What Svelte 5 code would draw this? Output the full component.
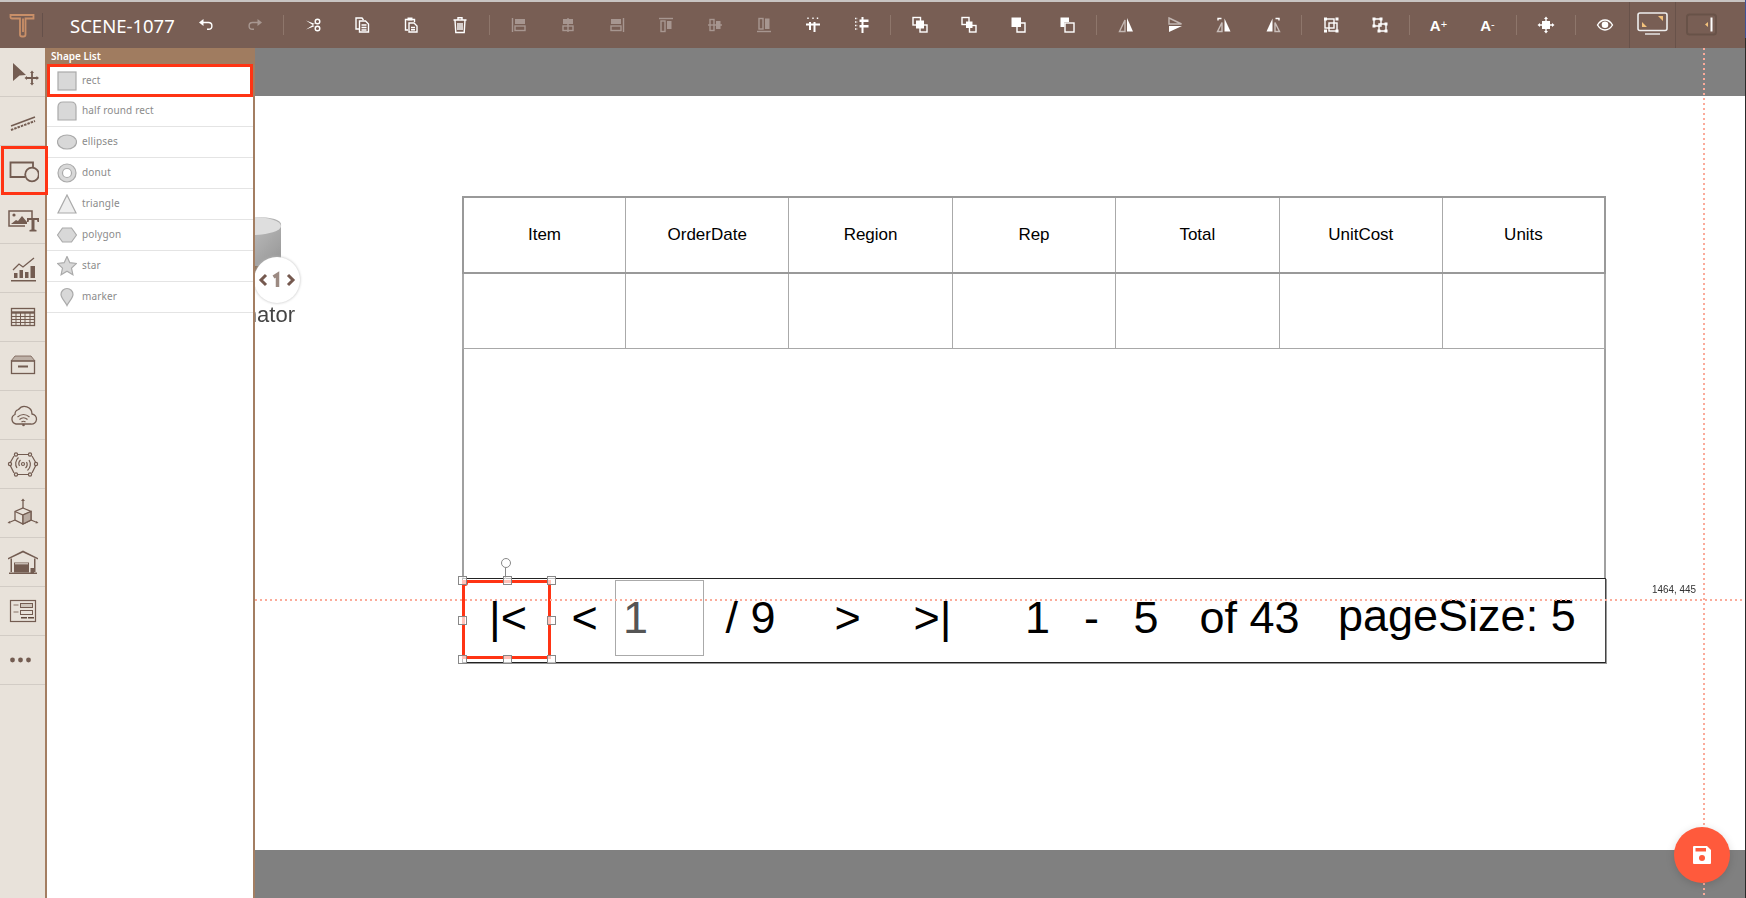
<script lang="ts">
	const L = 'fill="none" stroke="currentColor" stroke-width="1.4"';
	const F = 'fill="currentColor"';

	// markup of each toolbar icon, drawn on a 24 box
	const toolbar = [
		{ svg: `<path ${L} d="M8 9.5h6.5a3.4 3.4 0 0 1 0 6.8H13"/><path ${F} d="M9.5 6v7L5 9.5z"/>` },
		{ off: true, svg: `<path ${L} d="M16 9.5H9.5a3.4 3.4 0 0 0 0 6.8H11"/><path ${F} d="M14.5 6v7L19 9.5z"/>` },
		null,
		{ svg: `<circle ${L} cx="16.5" cy="8.5" r="2.3"/><circle ${L} cx="16.5" cy="15.5" r="2.3"/><path ${F} d="M5 7.5l9 3.5v2.5zM5 16.5l9-3.5V10.5z"/>` },
		{ svg: `<path ${L} d="M9 16H6V5h6l1.500 2"/><path ${L} d="M9.500 8h6l3 3v8h-9z"/><path ${L} d="M11.500 12h5M11.500 14.500h5M11.500 17h5" stroke-width="1"/>` },
		{ svg: `<path ${L} d="M9 17H6.500V6.500h9V9"/><path ${F} d="M8.500 4.500h5v3h-5z"/><path ${L} d="M10 10h5l3 3v6h-8z"/><path ${L} d="M12 14.500h4M12 16.800h4" stroke-width="1"/>` },
		{ svg: `<path ${L} d="M5.500 7h13M10 7V4.800h4V7M7 7l.8 12.500h8.400L17 7"/><path ${L} d="M10 10v7M12 10v7M14 10v7" stroke-width="1"/>` },
		null,
		{ off: true, svg: `<path ${L} d="M5.500 5v14"/><path ${F} d="M8 6h10v5H8z"/><rect ${L} x="8" y="13" width="10" height="4.500"/>` },
		{ off: true, svg: `<path ${L} d="M12 5v14"/><path ${F} d="M7 6h10v5H7z"/><rect ${L} x="7" y="13" width="10" height="4.500"/>` },
		{ off: true, svg: `<path ${L} d="M18.500 5v14"/><path ${F} d="M6 6h10v5H6z"/><rect ${L} x="6" y="13" width="10" height="4.500"/>` },
		{ off: true, svg: `<path ${L} d="M5 5.500h14"/><rect ${L} x="7" y="8" width="4" height="10.500"/><path ${F} d="M13 8h4.500v8H13z"/>` },
		{ off: true, svg: `<path ${L} d="M5 12h14"/><rect ${L} x="7" y="6.500" width="4" height="11"/><path ${F} d="M13 8h4.500v8H13z"/>` },
		{ off: true, svg: `<path ${L} d="M5 18.500h14"/><rect ${L} x="7" y="5.500" width="4" height="10.500"/><path ${F} d="M13 5.500h4.500V16H13z"/>` },
		{ svg: `<path ${L} d="M7 4.500v2M12 4.500v2M16.500 4.500v2" stroke-width="1" stroke-dasharray="1.500 .8"/><path ${F} d="M5 10.500h14v2H5zM8 9h2v8H8zM12.500 9h2v10h-2z"/>` },
		{ svg: `<path ${L} d="M5 5.500h2.500M5 9h2.500M5 12.500h2.500M5 16h2.500" stroke-width="1" stroke-dasharray="1.500 .8"/><path ${F} d="M11.500 4h2v16h-2zM9.500 6.500h9v2.500h-9zM9.500 12h9v2.500h-9z"/>` },
		null,
		{ svg: `<rect ${L} x="5" y="4.500" width="7.500" height="7.500"/><rect ${L} x="12" y="12" width="7" height="7"/><path ${F} d="M8 7.500h8v8H8z"/>` },
		{ svg: `<rect ${L} x="5" y="4.500" width="7" height="7"/><rect ${L} x="12.500" y="12.500" width="6.500" height="6.500"/><path ${F} d="M9 8.500h6.500v6.500H9z"/>` },
		{ svg: `<path ${F} d="M5.500 4.500h9.500V14H5.500z"/><path ${L} d="M15 10h4v9h-8v-5"/>` },
		{ svg: `<path ${F} d="M5.500 4.500H14V9H9.500v5H5.500z"/><rect ${L} x="10" y="10" width="9" height="9"/>` },
		null,
		{ svg: `<path ${L} d="M11 7L5.500 18.500H11z" opacity=".55"/><path ${F} d="M13 5l6 13.500h-6z"/>` },
		{ svg: `<path ${L} d="M6 5l12.500 6H6z" opacity=".55"/><path ${F} d="M6 13h13L6 19z"/>` },
		{ svg: `<path ${L} d="M10 9.500L5.500 18.500H10z" opacity=".6"/><path ${F} d="M12.500 5.500l6 13h-6z"/><path ${L} d="M6 7.500V5.500h3.500" stroke-width="1.100"/>` },
		{ svg: `<path ${L} d="M14 9.500l4.500 9H14z" opacity=".6"/><path ${F} d="M11.500 5.500l-6 13h6z"/><path ${L} d="M18 7.500V5.500h-3.500" stroke-width="1.100"/>` },
		null,
		{ svg: `<path ${F} d="M5 4.500h3v3H5zM16.500 4.500h3v3h-3zM5 16.500h3v3H5zM16.500 16.500h3v3h-3z"/><rect ${L} x="6" y="6" width="9" height="9"/><rect ${L} x="10" y="10" width="8" height="8"/>` },
		{ svg: `<path ${F} d="M4.500 4.500h3v3h-3zM11.500 4.500h3v3h-3zM4.500 11.500h3v3h-3zM16.500 9.500h3v3h-3zM9.500 16.500h3v3h-3zM16.500 16.500h3v3h-3z"/><path ${L} d="M6 6h7v7H6zM11 11h7v7h-7z"/>` },
		null,
		{ text: 'A', sup: '+' },
		{ text: 'A', sup: '-' },
		null,
		{ svg: `<path ${F} d="M8 8h8v8H8zM12 3.500l2 2.500h-4zM12 20.500l-2-2.500h4zM3.500 12L6 10v4zM20.500 12L18 14v-4z"/><path ${L} d="M5 12h14M12 5v14" stroke-width="1"/>` },
		null,
		{ svg: `<path ${L} d="M4.500 12c2-3.300 4.500-5 7.500-5s5.500 1.700 7.500 5c-2 3.300-4.500 5-7.500 5s-5.500-1.700-7.500-5z"/><circle ${F} cx="12" cy="11.700" r="3.300"/>` }
	];

	const columns = ['Item', 'OrderDate', 'Region', 'Rep', 'Total', 'UnitCost', 'Units'];

	const shapes = [
		{ name: 'rect', svg: '<rect x="1" y="1" width="18" height="18"/>' },
		{ name: 'half round rect', svg: '<path d="M1 19V6q0-5 5-5h8q5 0 5 5v13z"/>' },
		{ name: 'ellipses', svg: '<ellipse cx="10" cy="10" rx="9.500" ry="7"/>' },
		{ name: 'donut', svg: '<circle cx="10" cy="10" r="9"/><circle cx="10" cy="10" r="4.500" style="fill:#fff"/>' },
		{ name: 'triangle', svg: '<path d="M10 1l9 18H1z" style="fill:#eee"/>' },
		{ name: 'polygon', svg: '<path d="M5.500 3h9l5 7-5 7h-9l-5-7z"/>' },
		{ name: 'star', svg: '<path d="M10 .5l2.800 6.200 6.700.8-5 4.600 1.400 6.600-5.900-3.400-5.900 3.400 1.400-6.600-5-4.600 6.700-.8z"/>' },
		{ name: 'marker', svg: '<path d="M10 18.500C8 14 4 11 4 7.500a6 6 0 0 1 12 0C16 11 12 14 10 18.500z"/>' }
	];

	const handles = [
		[0, 0], [50, 0], [100, 0],
		[0, 50], [100, 50],
		[0, 100], [50, 100], [100, 100]
	];
</script>

<div class="app">
	<header class="toolbar">
		<div class="logo">
			<svg width="26" height="26" viewBox="0 0 26 26" fill="none" stroke="#c98f68" stroke-width="1.800">
				<path d="M1.500 3h23v3.500H16.500V22.500q0 2-2 2h-1.500q-2 0-2-2V6.500H3q-1.500 0-1.500-1.500z" />
				<path d="M14 6.500V20" />
			</svg>
		</div>
		<div class="title">SCENE-1077</div>
		<div class="tools">
			{#each toolbar as tool}
				{#if tool === null}
					<span class="sep"></span>
				{:else}
					<button class="tool" class:off={tool.off}>
						{#if tool.text}
							<span class="font-size">{tool.text}<small>{tool.sup}</small></span>
						{:else}
							<svg width="24" height="24" viewBox="0 0 24 24">{@html tool.svg}</svg>
						{/if}
					</button>
				{/if}
			{/each}
		</div>
		<div class="mode">
			<svg width="32" height="26" viewBox="0 0 32 26">
				<rect x="1" y="1" width="29" height="17.500" rx="2" fill="none" stroke="#eee" stroke-width="1.600" />
				<path d="M5 15v-5l5 5zM26 4v5l-5-5z" fill="#f3c27c" />
				<path d="M8 22h15" stroke="#eee" stroke-width="1.400" />
			</svg>
		</div>
		<div class="mode">
			<svg width="32" height="24" viewBox="0 0 32 24">
				<rect x="1" y="1.500" width="29" height="20" rx="2.500" fill="none" stroke="#685248" stroke-width="2" />
				<path d="M22 9v5l-3-2.500z" fill="#f3c27c" />
				<path d="M25.500 4.500v14" stroke="#fff" stroke-width="2" />
			</svg>
		</div>
	</header>

	<div class="body">
		<nav class="sidebar">
			<button class="side">
				<svg width="32" height="32" viewBox="0 0 32 32">
					<path d="M6 7l13 12-6.500.5L6 25z" fill="#735c51" />
					<path d="M25 16v12M19 22h12" stroke="#735c51" stroke-width="1.800" />
					<path d="M25 14.500l2 2.500h-4zM25 29.500l-2-2.500h4zM17.500 22l2.500-2v4zM32 22l-2.500 2v-4z" fill="#735c51" />
				</svg>
			</button>
			<button class="side">
				<svg width="32" height="32" viewBox="0 0 32 32" fill="none" stroke="#735c51">
					<path d="M4 21l24-9" stroke-width="1.500" />
					<path d="M4 25l24-9" stroke-width="2" stroke-dasharray="2.500 1" />
				</svg>
			</button>
			<button class="side active">
				<svg width="32" height="32" viewBox="0 0 32 32" fill="none" stroke="#735c51" stroke-width="1.800">
					<path d="M26 12V7.500H3.500V22H18" />
					<circle cx="25" cy="19.500" r="6.800" />
				</svg>
			</button>
			<button class="side">
				<svg width="32" height="32" viewBox="0 0 32 32">
					<path d="M18 23H2V8h23v7" fill="none" stroke="#735c51" stroke-width="1.500" />
					<circle cx="7" cy="12" r="1.600" fill="#735c51" />
					<path d="M4 21l5-4 2 1 4-5 5 6v2z" fill="#735c51" />
					<path d="M20 15h12v4h-1.500l-.5-2h-2.500v9.500l2 .5v1.500h-7V27l2-.5V17h-2.500l-.5 2H20z" fill="#735c51" />
				</svg>
			</button>
			<button class="side">
				<svg width="32" height="32" viewBox="0 0 32 32" fill="#735c51">
					<path d="M7 21h3.500v5H7zM12.500 18H16v8h-3.500zM18 20h3.500v6H18zM23.500 14H28v12h-4.500z" />
					<path d="M4 28h25v1.500H4z" />
					<path d="M6 18l6-6 4 3 11-9" fill="none" stroke="#735c51" stroke-width="1.300" />
				</svg>
			</button>
			<button class="side">
				<svg width="32" height="32" viewBox="0 0 32 32" fill="none" stroke="#735c51">
					<rect x="4.500" y="7.500" width="23" height="17" stroke-width="1.300" />
					<path d="M4.500 11.500h23" stroke-width="2.400" />
					<path d="M4.500 15.500h23M4.500 18.500h23M4.500 21.500h23M9 11v13M13.500 11v13M18 11v13M23 11v13" stroke-width="1" />
				</svg>
			</button>
			<button class="side">
				<svg width="32" height="32" viewBox="0 0 32 32">
					<path d="M8 6h16l4 5H4z" fill="#bdb0a6" stroke="#735c51" stroke-width=".8" />
					<rect x="4.500" y="11" width="23" height="12.500" fill="none" stroke="#735c51" stroke-width="1.300" />
					<path d="M11 15.500h10v2H11z" fill="#735c51" />
				</svg>
			</button>
			<button class="side">
				<svg width="32" height="32" viewBox="0 0 32 32" fill="none" stroke="#735c51">
					<path d="M9 25h15a5 5 0 0 0 1-10 7.500 7.500 0 0 0-13.500-4.500A5 5 0 0 0 8 15.500 5 5 0 0 0 9 25z" stroke-width="1.300" />
					<path d="M10.500 18q6-5 12 0M12.500 20.500q4-3.500 8 0M14.500 23q2-1.500 4 0" stroke-width="1.200" />
					<circle cx="16.500" cy="26" r="1.300" fill="#735c51" stroke="none" />
				</svg>
			</button>
			<button class="side">
				<svg width="32" height="32" viewBox="0 0 32 32" fill="none" stroke="#735c51" stroke-width="1.200">
					<path d="M10 6.500h12M25 8l4 7M29 17l-4 8M22 26.500H10M7 25l-4-8M3 15l4-7" />
					<circle cx="9" cy="6.500" r="1.600" /><circle cx="23" cy="6.500" r="1.600" />
					<circle cx="29" cy="16" r="1.600" /><circle cx="23" cy="26.500" r="1.600" />
					<circle cx="9" cy="26.500" r="1.600" /><circle cx="3" cy="16" r="1.600" />
					<circle cx="16" cy="16" r="1.500" />
					<path d="M12.500 18a5 5 0 0 1 1-6M10 20a8 8 0 0 1 1.500-10.500M19.500 14a5 5 0 0 1-1 6M22 12a8 8 0 0 1-1.500 10.500" />
				</svg>
			</button>
			<button class="side">
				<svg width="32" height="32" viewBox="0 0 32 32" fill="none" stroke="#735c51" stroke-width="1.300">
					<path d="M16 11l8 3.500v8.500l-8 4-8-4v-8.500z" />
					<path d="M8 14.500l8 3.500 8-3.500M16 18v9" />
					<path d="M16 27l8-4v-8.500l-8 3.500z" fill="#b8aaa0" />
					<path d="M16 11V3M24 23l6 2.500M8 23l-6 2.500" />
					<path d="M16 1.500l2 2.500h-4zM31.500 26l-3 .5 1-2.500zM.5 26l3 .5-1-2.500z" fill="#735c51" stroke="none" />
				</svg>
			</button>
			<button class="side">
				<svg width="32" height="32" viewBox="0 0 32 32" fill="#735c51">
					<path d="M1 12L16 4.500 31 12v1.500L16 6.500 1 13.500z" />
					<path d="M3.500 12.500h1.500V26H3.500zM27 12.500h1.500V26H27zM2 26.500h28V28H2z" />
					<path d="M7 16.500h15v10H7z" />
					<path d="M8 17.800h13" stroke="#e8e2da" stroke-width="1" />
					<path d="M23.500 22h3.500v5h-3.500z" />
				</svg>
			</button>
			<button class="side">
				<svg width="32" height="32" viewBox="0 0 32 32">
					<rect x="3.500" y="5.500" width="25" height="21" fill="none" stroke="#735c51" stroke-width="1.200" />
					<path d="M6.500 9h5v2h-5zM6.500 16h5v2h-5z" fill="#b8aaa0" />
					<rect x="13.500" y="8.500" width="12" height="4" fill="#cfc6bc" stroke="#735c51" />
					<rect x="13.500" y="15.500" width="12" height="4" fill="none" stroke="#735c51" />
					<path d="M14 22h6v1.500h-6zM21 22h6v1.500h-6z" fill="#5f483d" />
				</svg>
			</button>
			<button class="side">
				<svg width="32" height="32" viewBox="0 0 32 32" fill="#735c51">
					<circle cx="5.500" cy="16" r="2.400" /><circle cx="13.500" cy="16" r="2.400" /><circle cx="21.500" cy="16" r="2.400" />
				</svg>
			</button>
		</nav>

		<aside class="panel">
			<div class="panel-head">Shape List</div>
			{#each shapes as shape, i}
				<div class="shape" class:selected={i === 0}>
					<svg width="20" height="20" viewBox="0 0 20 20" class="shape-icon">{@html shape.svg}</svg>
					<span>{shape.name}</span>
				</div>
			{/each}
		</aside>

		<main class="canvas">
			<div class="page">
				<!-- palette thumbnail left behind on the scene -->
				<div class="stray">
					<svg width="60" height="90" viewBox="0 0 60 90" class="cylinder">
						<defs>
							<linearGradient id="steel" x1="0" x2="1" y1="0" y2="1">
								<stop offset="0" stop-color="#d0d0d0" />
								<stop offset="1" stop-color="#8f8f8f" />
							</linearGradient>
						</defs>
						<path d="M-30 10q0-9 29-9T26 10V60H-30z" fill="url(#steel)" />
						<ellipse cx="-2" cy="10" rx="28" ry="9" fill="#dedede" />
						<path d="M0 50h20v18H0z" fill="#8a7460" />
					</svg>
					<div class="badge">
						<svg width="38" height="20" viewBox="0 0 38 20" fill="none" stroke="#75594f" stroke-width="3">
							<path d="M8 5L3 10l5 5M30 5l5 5-5 5" />
							<path d="M15.500 7l4-2.500V17" stroke="#9c8a82" stroke-width="3.500" />
						</svg>
					</div>
					<div class="stray-label">Paginator</div>
				</div>

				<div class="scene">
					<div class="grid head">
						{#each columns as col}
							<div class="cell">{col}</div>
						{/each}
					</div>
					<div class="grid">
						{#each columns as col}
							<div class="cell"></div>
						{/each}
					</div>
					<div class="empty"></div>
					<div class="pager">
						<span>|&lt;</span>
						<span>&lt;</span>
						<span class="page-input"><i>1</i></span>
						<span>/ 9</span>
						<span>&gt;</span>
						<span>&gt;|</span>
						<span>1</span>
						<span>-</span>
						<span>5</span>
						<span>of 43</span>
						<span class="size">pageSize: 5</span>
					</div>

					<div class="selection">
						<span class="rotate"></span>
						<span class="anchor"></span>
						<div class="handles">
							{#each handles as [x, y]}
								<span class="handle" style="left: {x}%; top: {y}%"></span>
							{/each}
						</div>
					</div>
				</div>
			</div>

			<div class="guide-h"></div>
			<div class="guide-v"></div>
			<div class="coords">1464, 445</div>
		</main>
	</div>

	<div class="window-edge"></div>

	<button class="save" aria-label="Save">
		<svg width="20" height="20" viewBox="0 0 20 20">
			<path d="M2 1h13l4 4v13a1 1 0 0 1-1 1H2a1 1 0 0 1-1-1V2a1 1 0 0 1 1-1z" fill="#fff" />
			<path d="M3.500 3h10.500v3.500H3.500z" fill="#ff5a3c" />
			<circle cx="10" cy="13" r="3" fill="#ff5a3c" />
		</svg>
	</button>
</div>

<style>
	:global(body) {
		margin: 0;
		overflow: hidden;
		background: #fff;
	}

	.app {
		position: relative;
		display: flex;
		flex-direction: column;
		height: 898px;
		font-family: 'Liberation Sans', Arial, sans-serif;
	}

	button {
		padding: 0;
		border: none;
		background: none;
		font: inherit;
	}

	.toolbar {
		display: flex;
		align-items: center;
		flex: 0 0 48px;
		box-sizing: border-box;
		border-top: 2px solid #c8c4c2;
		background: #785e54;
		color: #fff;
	}

	.logo {
		display: flex;
		justify-content: center;
		flex: 0 0 43px;
		height: 24px;
		align-items: center;
		border-right: 1px solid #65504a;
		padding-left: 1px;
		box-sizing: border-box;
	}

	.title {
		flex: 0 0 138px;
		box-sizing: border-box;
		padding-left: 27px;
		font-family: 'Noto Sans', sans-serif;
		font-size: 18.5px;
		white-space: nowrap;
	}

	.tools {
		display: flex;
		align-items: center;
		flex: 1;
	}

	.tool {
		display: flex;
		align-items: center;
		justify-content: center;
		flex: 0 0 49px;
		height: 46px;
		color: #fff;
	}
	.tool.off {
		opacity: 0.35;
	}

	.sep {
		flex: 0 0 1px;
		height: 20px;
		margin: 0 4.25px;
		background: #8e766b;
	}

	.font-size {
		font-size: 15px;
		font-weight: 700;
	}
	.font-size small {
		font-size: 11px;
		font-weight: 400;
		vertical-align: 3px;
	}

	.mode {
		display: flex;
		align-items: center;
		justify-content: center;
		flex: 0 0 46px;
		height: 46px;
		box-sizing: border-box;
		border-left: 1px solid #68524a;
	}
	.mode:last-child {
		flex: 0 0 71px;
		padding-right: 18px;
	}

	.body {
		display: flex;
		flex: 1;
		min-height: 0;
	}

	.sidebar {
		display: flex;
		flex-direction: column;
		flex: 0 0 45px;
		min-width: 0;
		background: #e8e2da;
	}

	.side {
		display: flex;
		align-items: center;
		justify-content: center;
		flex: 0 0 49px;
		box-sizing: border-box;
		border-bottom: 1px solid #d2ccc5;
	}
	.side.active {
		position: relative;
		z-index: 3;
		width: 47px;
		margin-left: 1px;
		padding-right: 3px;
		outline: 3px solid #ff3414;
		outline-offset: -3px;
		border-bottom: none;
	}

	.panel {
		position: relative;
		z-index: 2;
		flex: 0 0 210px;
		box-sizing: border-box;
		border: solid #a37e62;
		border-width: 0 2px;
		background: #fff;
	}

	.panel-head {
		height: 17px;
		margin: 0 -2px;
		padding-left: 6px;
		background: #a07c60;
		color: #fff;
		font-family: 'Noto Sans', sans-serif;
		font-size: 10px;
		font-weight: 600;
		line-height: 16px;
	}

	.shape {
		display: flex;
		align-items: center;
		gap: 5px;
		height: 31px;
		box-sizing: border-box;
		padding-left: 10px;
		border-bottom: 1px solid #e4e4e4;
		color: #8b8b8b;
		font-family: 'Noto Sans', sans-serif;
		font-size: 10px;
		letter-spacing: 0.15px;
	}
	.shape span {
		margin-bottom: 2px;
	}
	.shape.selected {
		height: 33px;
		margin: -1px 0 -1px;
		position: relative;
		outline: 3px solid #ff3414;
		outline-offset: -3px;
		border-bottom: none;
	}

	.shape-icon :global(*) {
		fill: #d8d8d8;
		stroke: #aaa;
		stroke-width: 1.2;
	}

	.canvas {
		position: relative;
		flex: 1;
		display: flex;
		padding: 48px 0;
		background: #808080;
		overflow: hidden;
	}

	.page {
		position: relative;
		flex: 1;
		background: #fff;
	}

	.stray {
		position: absolute;
		left: 0;
		top: 120px;
		filter: blur(0.6px);
	}
	.cylinder {
		display: block;
	}
	.badge {
		position: absolute;
		left: -1px;
		top: 41px;
		display: flex;
		align-items: center;
		justify-content: center;
		width: 46px;
		height: 46px;
		border-radius: 50%;
		background: #fff;
		box-shadow: 0 0 3px #bbb;
	}
	.stray-label {
		position: absolute;
		right: 20px;
		top: 86px;
		color: #444;
		font-size: 22px;
		white-space: nowrap;
	}

	.scene {
		position: absolute;
		left: 207px;
		top: 100px;
		width: 1144px;
		height: 467px;
		display: flex;
		flex-direction: column;
	}

	.grid {
		display: grid;
		grid-template-columns: 162px repeat(5, 163.4px) 1fr;
		height: 75px;
		box-sizing: border-box;
		border: solid #aaa;
		border-width: 0 2px 1px;
		border-color: #a8a8a8;
	}
	.grid.head {
		height: 78px;
		border-top: 2px solid #999;
		border-bottom: 2px solid #999;
		border-left-color: #999;
		border-right-color: #999;
	}

	.cell {
		display: flex;
		align-items: center;
		justify-content: center;
		border-right: 1.5px solid #aaa;
		color: #000;
		font-size: 17px;
	}
	.cell:last-child {
		border-right: none;
	}

	.empty {
		flex: 1;
		border: solid #a0a0a0;
		border-width: 0 2px;
	}

	.pager {
		display: grid;
		grid-template-columns: 82.5px 43.5px 110.5px 109px 79px 111.5px 59px 49.5px 66px 138.5px 1fr;
		align-items: center;
		flex: 0 0 85px;
		box-sizing: border-box;
		padding: 0 0 6px 26px;
		border: 1.5px solid #222;
		border-right-color: #444;
		box-shadow: 1px 1px 0 #999;
		color: #000;
		font-size: 45px;
		line-height: 52px;
		white-space: nowrap;
	}
	.page-input {
		display: flex;
		align-items: center;
		width: 89px;
		height: 76px;
		box-sizing: border-box;
		padding-left: 7px;
		border: 1px solid #aaa;
		color: #555;
	}
	.page-input i {
		font-style: normal;
	}
	.size {
		margin-top: -4px;
	}

	.selection {
		position: absolute;
		left: 0;
		top: 384px;
		width: 89px;
		height: 79px;
		box-sizing: border-box;
		border: 3px solid #ff3414;
	}
	.anchor {
		position: absolute;
		left: -3px;
		top: -3px;
		width: 6px;
		height: 6px;
		border-radius: 50%;
		background: #ff3414;
	}
	.handles {
		position: absolute;
		inset: -3px;
	}
	.handle {
		position: absolute;
		width: 7px;
		height: 7px;
		margin: -4px 0 0 -4px;
		border: 1px solid #888;
		background: rgba(255, 255, 255, 0.7);
	}
	.rotate {
		position: absolute;
		left: 50%;
		top: -25px;
		width: 8px;
		height: 8px;
		margin-left: -6px;
		border: 1px solid #888;
		border-radius: 50%;
		background: #fff;
	}
	.rotate::after {
		content: '';
		position: absolute;
		left: 3.500px;
		top: 9px;
		width: 1px;
		height: 11px;
		background: #888;
	}

	.guide-h {
		position: absolute;
		left: 0;
		right: 0;
		top: 551px;
		height: 2px;
		background: repeating-linear-gradient(90deg, #fbab9a 0 2px, transparent 2px 5px);
	}
	.guide-v {
		position: absolute;
		left: 1448px;
		top: 0;
		bottom: 0;
		width: 2px;
		background: repeating-linear-gradient(180deg, #fbab9a 0 2px, transparent 2px 5px);
	}
	.coords {
		position: absolute;
		left: 1397px;
		top: 535px;
		color: #333;
		font-size: 11px;
		transform: scaleX(0.9);
		transform-origin: left;
		white-space: nowrap;
	}

	.window-edge {
		position: absolute;
		top: 0;
		right: 0;
		bottom: 0;
		width: 1px;
		background: linear-gradient(180deg, #3f5294 0 38px, #2a2a2a 38px);
	}

	.save {
		position: absolute;
		left: 1674px;
		top: 827px;
		display: flex;
		align-items: center;
		justify-content: center;
		width: 56px;
		height: 56px;
		border-radius: 50%;
		background: #ff5a3c;
		box-shadow: 0 2px 8px rgba(0, 0, 0, 0.15);
	}
</style>
